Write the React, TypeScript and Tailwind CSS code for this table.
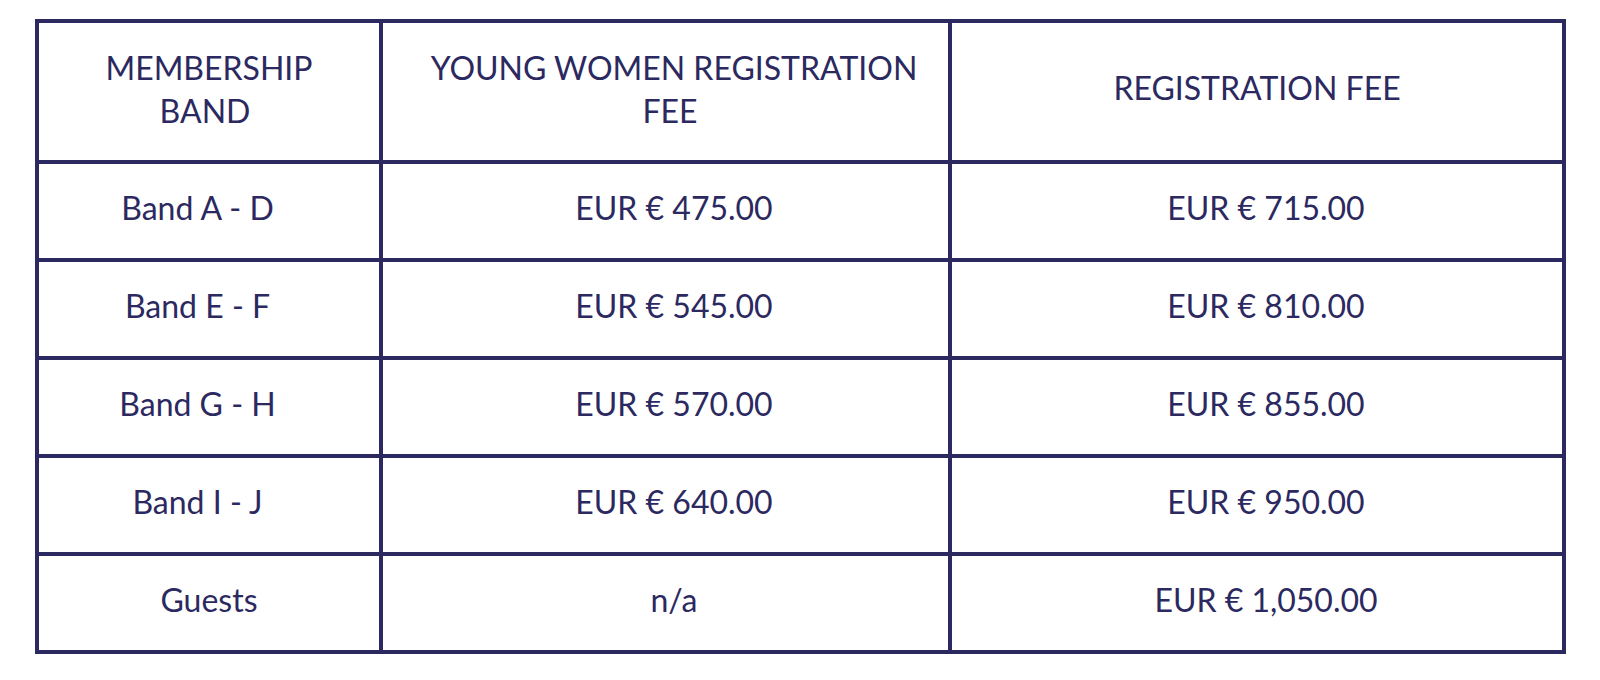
export default function App() {
  const rows: [string, string, string][] = [
    ["Band A - D", "EUR € 475.00", "EUR € 715.00"],
    ["Band E - F", "EUR € 545.00", "EUR € 810.00"],
    ["Band G - H", "EUR € 570.00", "EUR € 855.00"],
    ["Band I - J", "EUR € 640.00", "EUR € 950.00"],
    ["Guests", "n/a", "EUR € 1,050.00"],
  ];
  return (
    <div className="w-[1600px] h-[680px] bg-white pt-[19px] pl-[35px]" style={{ fontFamily: "Lato, 'Noto Sans', sans-serif" }}>
      <div className="w-[1531px] border-[4px] border-[#2b2960] bg-[#2b2960] grid grid-cols-[340px_565px_610px] gap-[4px] text-[#2b2960]">
        <div className="bg-white h-[137px] flex flex-col items-center justify-center text-center text-[32px] leading-[43px] pb-[5px]">
          <span>MEMBERSHIP</span>
          <span className="pr-[8px]">BAND</span>
        </div>
        <div className="bg-white h-[137px] flex flex-col items-center justify-center text-center text-[32px] leading-[43px] pb-[5px] pl-[17px]">
          <span>YOUNG WOMEN REGISTRATION</span>
          <span className="pr-[8px]">FEE</span>
        </div>
        <div className="bg-white h-[137px] flex items-center justify-center text-center text-[32px] leading-[43px] pb-[9px]">
          REGISTRATION FEE
        </div>
        {rows.map((r, i) => (
          <>
            <div key={`a${i}`} className={`bg-white h-[94px] flex items-center justify-center text-[32px] pb-[6px] ${i < 4 ? "pr-[23px]" : ""}`}>
              {r[0]}
            </div>
            <div key={`b${i}`} className="bg-white h-[94px] flex items-center justify-center text-[32px] pb-[6px] pl-[17px]">
              {r[1]}
            </div>
            <div key={`c${i}`} className="bg-white h-[94px] flex items-center justify-center text-[32px] pb-[6px] pl-[18px]">
              {r[2]}
            </div>
          </>
        ))}
      </div>
    </div>
  );
}
